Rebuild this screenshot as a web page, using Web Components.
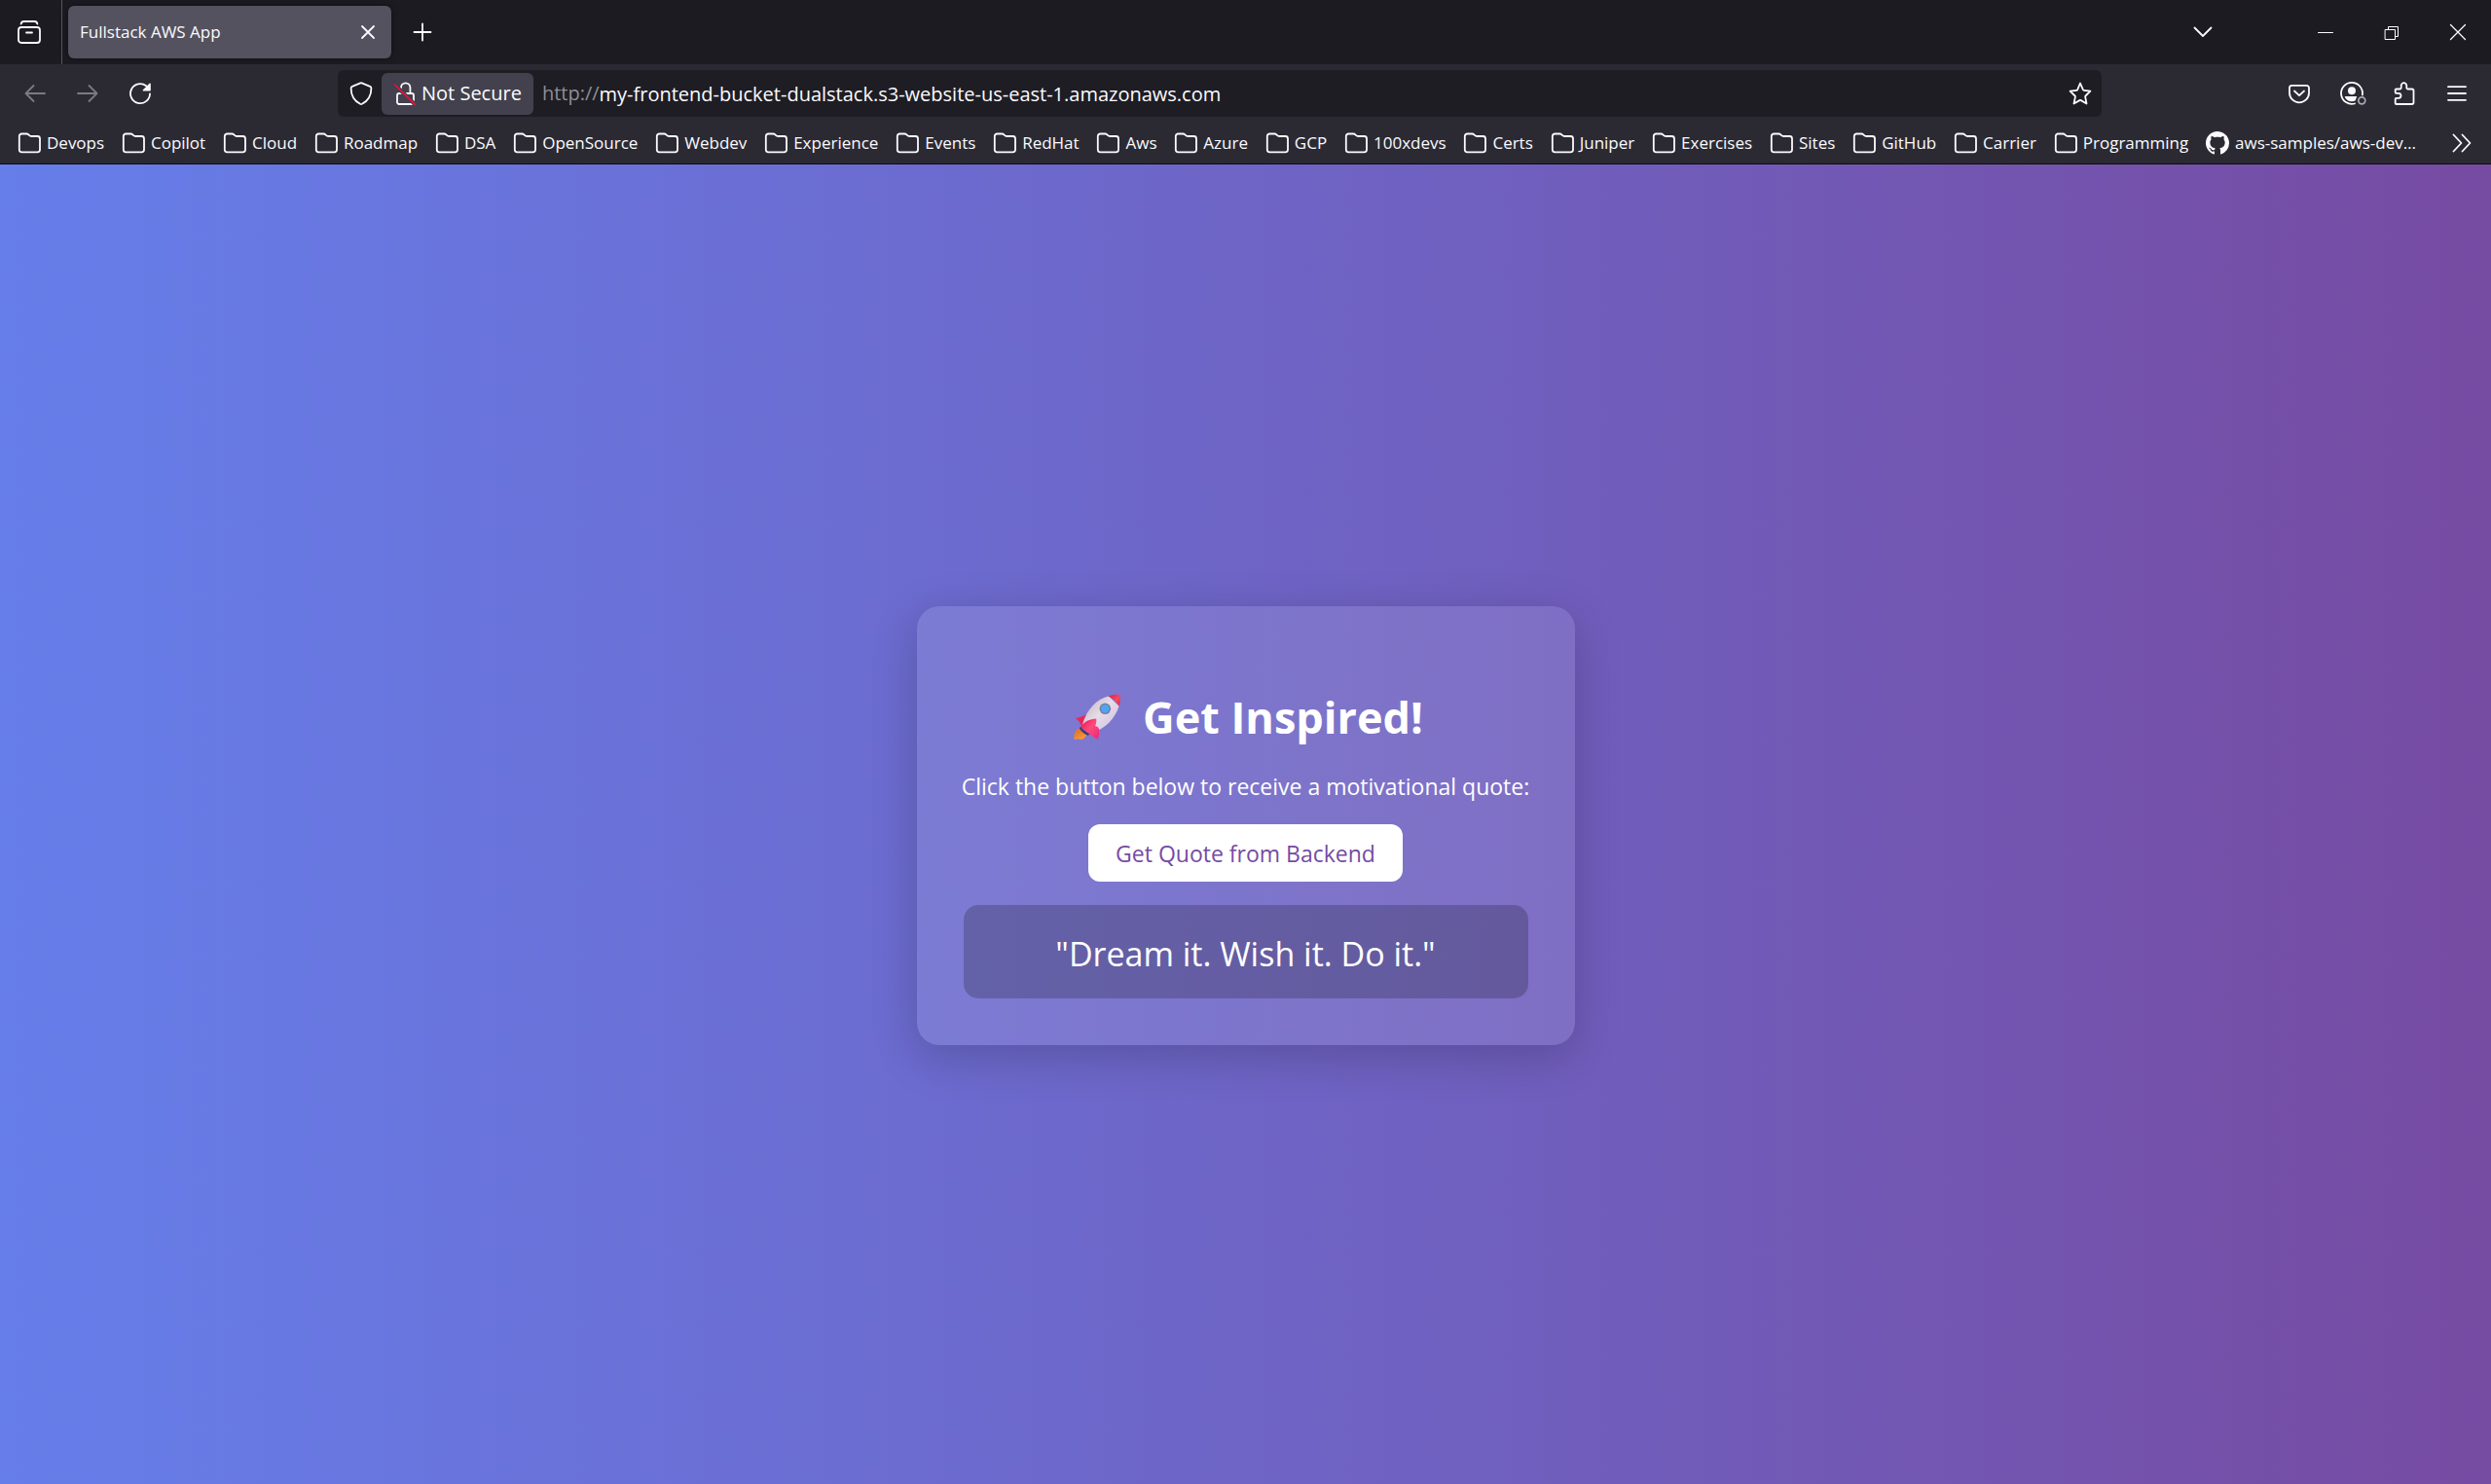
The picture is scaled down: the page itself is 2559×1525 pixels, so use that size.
<!DOCTYPE html>
<html lang="en">
<head>
<meta charset="utf-8">
<title>Fullstack AWS App</title>
<style>
  html, body { height: 100%; margin: 0; }
  body {
    display: flex;
    flex-direction: column;
    font-family: "Open Sans", "Noto Sans", sans-serif;
    color: #fbfbfe;
    background: #2b2a33;
  }
</style>
</head>
<body>
<tab-strip></tab-strip>
<nav-bar></nav-bar>
<bookmarks-bar>
  <bookmark-item>Devops</bookmark-item>
  <bookmark-item>Copilot</bookmark-item>
  <bookmark-item>Cloud</bookmark-item>
  <bookmark-item>Roadmap</bookmark-item>
  <bookmark-item>DSA</bookmark-item>
  <bookmark-item>OpenSource</bookmark-item>
  <bookmark-item>Webdev</bookmark-item>
  <bookmark-item>Experience</bookmark-item>
  <bookmark-item>Events</bookmark-item>
  <bookmark-item>RedHat</bookmark-item>
  <bookmark-item>Aws</bookmark-item>
  <bookmark-item>Azure</bookmark-item>
  <bookmark-item>GCP</bookmark-item>
  <bookmark-item>100xdevs</bookmark-item>
  <bookmark-item>Certs</bookmark-item>
  <bookmark-item>Juniper</bookmark-item>
  <bookmark-item>Exercises</bookmark-item>
  <bookmark-item>Sites</bookmark-item>
  <bookmark-item>GitHub</bookmark-item>
  <bookmark-item>Carrier</bookmark-item>
  <bookmark-item>Programming</bookmark-item>
  <bookmark-item icon="github">aws-samples/aws-dev…</bookmark-item>
</bookmarks-bar>
<quote-page>
  <quote-card>
    <span slot="title">Get Inspired!</span>
    <span slot="intro">Click the button below to receive a motivational quote:</span>
    <span slot="action">Get Quote from Backend</span>
    <span slot="quote">"Dream it. Wish it. Do it."</span>
  </quote-card>
</quote-page>

<script>
const ICONS = {
  view: '<path d="M3.6 3.6C4 1.8 4.8 1 6.4 1h11.200c1.600 0 2.400.8 2.800 2.600"/><rect x="1" y="7" width="22" height="16" rx="3"/><path d="M9 12.500h6"/>',
  close: '<path d="M6 6l12 12M18 6 6 18"/>',
  plus: '<path d="M12 3.500v17M3.500 12h17"/>',
  chevron: '<path d="M3.500 7.500 12 16l8.500-8.500"/>',
  minimize: '<path d="M4.500 12.500h15" stroke-width="1"/>',
  restore: '<path d="M5.500 9.500h10v10h-10zM8.500 9.500v-3h10v10h-3" stroke-width="1"/>',
  exit: '<path d="M4.500 4.500l15 15M19.500 4.500l-15 15" stroke-width="1.300"/>',
  back: '<path d="M22 12H2.500M10.500 4l-8 8 8 8"/>',
  forward: '<path d="M2 12h19.500M13.500 4l8 8-8 8"/>',
  reload: '<path d="M22 12.500A10 10 0 1 1 18.200 4.300"/><path d="M22.800 2.200v6.600c0 .5-.3.800-.8.800h-6.600c-.7 0-1-.8-.5-1.300l6.600-6.600c.5-.5 1.300-.2 1.300.5z" fill="currentColor" stroke="none"/>',
  shield: '<path d="M11.200 1.400 2.800 4.900c-.8.300-1.200.9-1.200 1.800 0 6.800 3.200 12.800 9.400 16.100.6.300 1.400.3 2 0 6.200-3.300 9.400-9.300 9.400-16.100 0-.9-.4-1.500-1.200-1.800l-8.400-3.500c-.5-.2-1.100-.2-1.600 0z"/>',
  lock: '<path d="M8 6.500V6a4.700 4.700 0 0 1 9.400 0v6"/><rect x="4" y="12" width="17" height="11" rx="2"/><path d="M2 3.500l20 19.500" stroke="#42414d" stroke-width="4" stroke-linecap="butt"/><path d="M1.700 3.200l20.600 20.100" stroke="#e2143f" stroke-width="1.700"/>',
  star: '<path d="M12 1.500l2.900 6.700c.2.400.5.600.9.600l6.600.8-4.900 4.900c-.3.300-.4.700-.3 1.100l1.300 6.900-5.800-3.400c-.4-.2-.9-.2-1.300 0l-5.900 3.400 1.400-6.900c.1-.4 0-.8-.3-1.100L1.600 9.600l6.700-.8c.4 0 .7-.3.900-.6z"/>',
  pocket: '<path d="M4.500 3.800h15a2.500 2.500 0 0 1 2.500 2.500v5.200a10 9.800 0 0 1-20 0V6.300a2.500 2.500 0 0 1 2.500-2.500z"/><path d="M7 9.500l5 4.700 5-4.700"/>',
  account: '<path d="M15 22.500A11 11 0 1 1 22.900 13.500"/><circle cx="12" cy="9.300" r="4" fill="currentColor" stroke="none"/><path d="M5.500 15h11c.5 0 .8.300.6.700-.7 1-1.100 2-1.100 3.300-1.200.8-2.500 1.200-4 1.200-3 0-5.700-1.700-7.100-4.300-.2-.5.100-.900.600-.900z" fill="currentColor" stroke="none"/><circle cx="22.300" cy="19.300" r="3.500" stroke="#a7a6ad"/>',
  extension: '<path d="M3.500 7.500h4c.7 0 1.200-.5 1.200-1.200V4a2.800 2.800 0 0 1 5.600 0v2.300c0 .7.500 1.200 1.200 1.200h4.300c.9 0 1.700.8 1.700 1.700v12.100c0 .9-.8 1.700-1.700 1.700H3.700c-.6 0-1-.4-1-1v-4.200c0-.6.400-1 1-1H6a2.500 2.500 0 0 0 0-5H3.700c-.6 0-1-.4-1-1V8.500c0-.6.300-1 .800-1z"/>',
  menu: '<path d="M3 5.200h18M3 12h18M3 18.800h18"/>',
  folder: '<path d="M4.300 2.500h5c.8 0 1.500.3 2 .8l.9.9c.5.500 1.200.8 2 .8h6.300a2.500 2.500 0 0 1 2.500 2.500v11.300a2.500 2.500 0 0 1-2.500 2.500H4.300a2.500 2.500 0 0 1-2.500-2.500V5a2.500 2.500 0 0 1 2.500-2.500z"/>',
  more: '<path d="M3.500 3.500l8 8.500-8 8.500M12.500 3.500l8 8.500-8 8.500"/>',
  github: '<path transform="scale(1.5)" fill="currentColor" stroke="none" d="M8 0C3.580 0 0 3.580 0 8c0 3.540 2.290 6.530 5.470 7.590.4.070.55-.17.55-.38 0-.19-.01-.82-.01-1.490-2.010.37-2.530-.49-2.690-.94-.09-.23-.48-.94-.82-1.130-.28-.15-.68-.52-.01-.53.63-.01 1.080.58 1.230.82.72 1.210 1.870.87 2.330.66.07-.52.28-.87.51-1.070-1.780-.2-3.640-.89-3.640-3.950 0-.87.31-1.590.82-2.150-.08-.2-.36-1.020.08-2.120 0 0 .67-.21 2.200.82.64-.18 1.320-.27 2-.27.68 0 1.360.09 2 .27 1.530-1.040 2.200-.82 2.200-.82.44 1.100.16 1.920.08 2.120.51.56.82 1.270.82 2.150 0 3.070-1.870 3.750-3.650 3.950.29.25.54.73.54 1.480 0 1.070-.01 1.930-.01 2.200 0 .21.15.46.55.38A8.013 8.013 0 0 0 16 8c0-4.420-3.580-8-8-8z"/>'
};

const BASE = `
  :host, * { box-sizing: border-box; }
  button { border: 0; margin: 0; padding: 0; background: none; color: inherit; font: inherit; display: flex; align-items: center; justify-content: center; }
`;

function define(name, css, html) {
  customElements.define(name, class extends HTMLElement {
    connectedCallback() {
      if (this.shadowRoot) return;
      const root = this.attachShadow({ mode: 'open' });
      root.innerHTML = `<style>${BASE}${css}</style>${typeof html === 'function' ? html(this) : html}`;
    }
  });
}

define('ui-icon', `
  :host { display: block; flex: none; width: 24px; height: 24px; }
  svg { display: block; width: 100%; height: 100%; overflow: visible; fill: none; stroke: currentColor; stroke-width: 1.8; stroke-linecap: round; stroke-linejoin: round; }
`, el => `<svg viewBox="0 0 24 24" aria-hidden="true">${ICONS[el.getAttribute('name')]}</svg>`);

define('tab-strip', `
  :host { display: flex; height: 66px; background: #1c1b22; }
  .view { width: 64px; padding-right: 3px; border-right: 1px solid #55545c; }
  .tab { display: flex; align-items: center; justify-content: space-between; width: 332px; height: 54px; margin: 6px; padding: 0 12px; border-radius: 6px; background: #54525e; box-shadow: 0 0 6px rgba(0,0,0,.5); font-size: 17px; line-height: 24px; }
  .new { width: 52px; }
  .right { display: flex; margin-left: auto; }
  .right button { width: 68px; }
  .right .list { margin-right: 58px; }
`, `
  <button class="view" aria-label="Recent browsing"><ui-icon name="view"></ui-icon></button>
  <div class="tab"><span>Fullstack AWS App</span><button aria-label="Close tab"><ui-icon name="close"></ui-icon></button></div>
  <button class="new" aria-label="New tab"><ui-icon name="plus"></ui-icon></button>
  <div class="right">
    <button class="list" aria-label="List all tabs"><ui-icon name="chevron"></ui-icon></button>
    <button aria-label="Minimize"><ui-icon name="minimize"></ui-icon></button>
    <button aria-label="Restore"><ui-icon name="restore"></ui-icon></button>
    <button aria-label="Close window"><ui-icon name="exit"></ui-icon></button>
  </div>
`);

define('nav-bar', `
  :host { display: flex; align-items: center; height: 60px; padding: 0 8px 0 9px; background: #2b2a33; }
  .group { display: flex; }
  .group button { width: 54px; height: 48px; }
  button[disabled] { color: #7c7b83; }
  .field { display: flex; align-items: center; flex: 1; height: 48px; margin: 0 176px; padding: 0 10px 0 12px; border-radius: 6px; background: #1e1d24; font-size: 20px; line-height: 28px; }
  .chip { height: 43px; margin-left: 9px; padding: 0 12px; gap: 5px; border-radius: 6px; background: #42414d; }
  label { margin-left: 9px; color: #8f8e95; }
  input { flex: 1; min-width: 0; height: 40px; border: 0; padding: 0; outline: 0; background: none; color: inherit; font: inherit; }
`, `
  <div class="group">
    <button disabled aria-label="Back"><ui-icon name="back"></ui-icon></button>
    <button disabled aria-label="Forward"><ui-icon name="forward"></ui-icon></button>
    <button aria-label="Reload"><ui-icon name="reload"></ui-icon></button>
  </div>
  <div class="field">
    <button aria-label="Tracking protection"><ui-icon name="shield"></ui-icon></button>
    <button class="chip"><ui-icon name="lock"></ui-icon>Not Secure</button>
    <label for="url">http://</label>
    <input id="url" type="text" spellcheck="false" value="my-frontend-bucket-dualstack.s3-website-us-east-1.amazonaws.com">
    <button aria-label="Bookmark this page"><ui-icon name="star"></ui-icon></button>
  </div>
  <div class="group">
    <button aria-label="Save to Pocket"><ui-icon name="pocket"></ui-icon></button>
    <button aria-label="Account"><ui-icon name="account"></ui-icon></button>
    <button aria-label="Extensions"><ui-icon name="extension"></ui-icon></button>
    <button aria-label="Menu"><ui-icon name="menu"></ui-icon></button>
  </div>
`);

define('bookmarks-bar', `
  :host { display: flex; align-items: center; justify-content: space-between; height: 43px; padding: 0 18px; border-bottom: 1px solid #0c0c0d; background: #2b2a33; }
  nav { display: flex; flex: 1; justify-content: space-between; margin-right: 35px; }
`, `<nav aria-label="Bookmarks"><slot></slot></nav><button aria-label="More bookmarks"><ui-icon name="more"></ui-icon></button>`);

define('bookmark-item', `
  :host { display: block; font-size: 17px; line-height: 24px; white-space: nowrap; }
  a { display: flex; align-items: center; gap: 6px; color: inherit; text-decoration: none; }
`, el => `<a href="#"><ui-icon name="${el.getAttribute('icon') || 'folder'}"></ui-icon><span><slot></slot></span></a>`);

define('quote-page', `
  :host { display: flex; flex: 1; align-items: center; justify-content: center; padding-top: 3px; background: linear-gradient(to right, #667eea, #764ba2); color: #fff; }
`, `<slot></slot>`);

define('rocket-icon', `
  :host { display: block; flex: none; width: 48px; height: 48px; }
  svg { display: block; overflow: visible; }
`, `
  <svg width="48" height="48" viewBox="0 0 48 48" role="img" aria-label="Rocket">
    <defs>
      <linearGradient id="body" x1="14" y1="12" x2="36" y2="32" gradientUnits="userSpaceOnUse"><stop offset="0" stop-color="#cdbfcb"/><stop offset=".5" stop-color="#e6dce8"/><stop offset="1" stop-color="#d9cbe6"/></linearGradient>
      <linearGradient id="nose" x1="38" y1="2" x2="48" y2="10" gradientUnits="userSpaceOnUse"><stop offset="0" stop-color="#e4264c"/><stop offset=".6" stop-color="#fb4a5e"/><stop offset="1" stop-color="#d92a50"/></linearGradient>
      <linearGradient id="fin" x1="10" y1="28" x2="26" y2="42" gradientUnits="userSpaceOnUse"><stop offset="0" stop-color="#e8205a"/><stop offset=".45" stop-color="#ff4a7c"/><stop offset="1" stop-color="#ee2f78"/></linearGradient>
      <linearGradient id="flame" x1="3" y1="36" x2="9" y2="48" gradientUnits="userSpaceOnUse"><stop offset="0" stop-color="#d8702f"/><stop offset="1" stop-color="#fd9d35"/></linearGradient>
    </defs>
    <path d="M5 35.500C1.500 37 0 41.500.4 46.500c1.200.8 3 .8 4.200-.8.600 1.700 2.900 1.600 4.600.9 2.600-1 4-3 4-5.800z" fill="url(#flame)"/>
    <path d="M13 21.500 2 25.500c2.800 1.500 4.600 4 6.200 7.800l6-6z" fill="#e9265c"/>
    <path d="M36 2.500C24 5 13.500 15.500 9 31.500c2.200 4 5.500 7 9.500 8.500C32 36.500 43 25 46.500 12.500z" fill="url(#body)"/>
    <path d="M35.500 2.600C39.500.8 43.500.4 46.500 1c1.400.3 1.500 1 1.500 2 0 3.200-.5 6.500-1.600 9.700-2-4.200-6-8.200-10.900-10.100z" fill="url(#nose)"/>
    <circle cx="32.300" cy="15.300" r="5.800" fill="#77819c"/>
    <circle cx="32.300" cy="15.300" r="4.200" fill="#4da5f5"/>
    <path d="M23.200 25.500c-7 .4-12.400 3-16 8.500l9 7.600L24.700 47c1.500-3.800 1.900-7.800 1.300-11-.8-1.800-2-3-4-2.800 1.200-2.400 1.600-5 1.200-7.700z" fill="url(#fin)"/>
    <path d="M7.300 33.800c2 3 5 5.500 9 7.400l-1.600 1.600c-4-1.400-7-4-8.800-7.500z" fill="#413a70"/>
  </svg>
`);

define('quote-card', `
  :host { display: block; width: 676px; padding: 48px; border-radius: 23px; background: rgba(255,255,255,.11); box-shadow: 0 12px 48px rgba(0,0,0,.2); }
  .col { display: flex; flex-direction: column; align-items: center; white-space: nowrap; }
  h1 { display: flex; align-items: center; gap: 23px; margin: 34px 0 23px; padding-left: 6px; font-size: 45px; line-height: 64px; font-weight: 700; }
  p { margin: 0 0 23px; font-size: 23px; line-height: 32px; }
  button { height: 59px; padding: 0 28px; border-radius: 12px; background: #fff; color: #764ba2; font-size: 23px; line-height: 32px; }
  output { display: flex; align-items: center; justify-content: center; width: 100%; height: 96px; margin-top: 24px; padding-top: 3px; border-radius: 15px; background: rgba(0,0,0,.2); font-size: 34px; line-height: 48px; }
`, `
  <div class="col">
    <h1><rocket-icon></rocket-icon><slot name="title"></slot></h1>
    <p><slot name="intro"></slot></p>
    <button type="button"><slot name="action"></slot></button>
    <output><slot name="quote"></slot></output>
  </div>
`);
</script>
</body>
</html>
